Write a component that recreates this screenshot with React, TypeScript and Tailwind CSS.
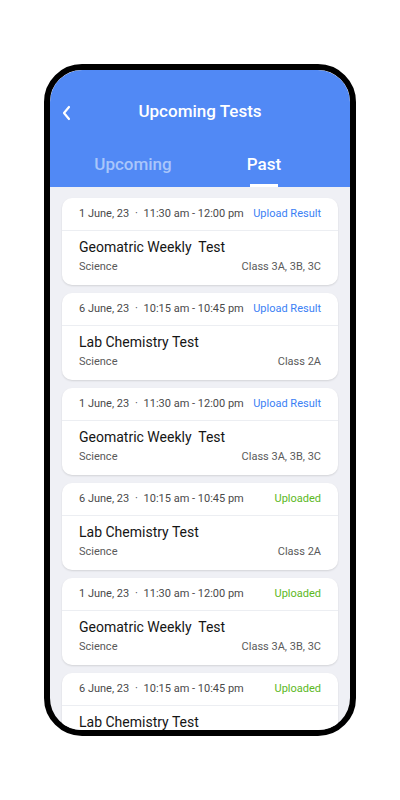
import React from "react";

type Item = {
  date: string;
  time: string;
  title: string;
  cls: string;
  status: "upload" | "uploaded";
};

const items: Item[] = [
  { date: "1 June, 23", time: "11:30 am - 12:00 pm", title: "Geomatric Weekly  Test", cls: "Class 3A, 3B, 3C", status: "upload" },
  { date: "6 June, 23", time: "10:15 am - 10:45 pm", title: "Lab Chemistry Test", cls: "Class 2A", status: "upload" },
  { date: "1 June, 23", time: "11:30 am - 12:00 pm", title: "Geomatric Weekly  Test", cls: "Class 3A, 3B, 3C", status: "upload" },
  { date: "6 June, 23", time: "10:15 am - 10:45 pm", title: "Lab Chemistry Test", cls: "Class 2A", status: "uploaded" },
  { date: "1 June, 23", time: "11:30 am - 12:00 pm", title: "Geomatric Weekly  Test", cls: "Class 3A, 3B, 3C", status: "uploaded" },
  { date: "6 June, 23", time: "10:15 am - 10:45 pm", title: "Lab Chemistry Test", cls: "Class 2A", status: "uploaded" },
];

function Card({ it }: { it: Item }) {
  return (
    <div className="bg-white rounded-[10px] shadow-[0_1px_2px_rgba(0,0,0,0.12)] shrink-0">
      <div className="h-[33px] px-[17px] flex items-center justify-between border-b border-[#eceef2]">
        <div className="text-[11px] text-[#4a4a4a] whitespace-pre">
          {it.date} <span className="mx-[3px]">·</span> {it.time}
        </div>
        {it.status === "upload" ? (
          <div className="text-[11px] text-[#3b7ff5]">Upload Result</div>
        ) : (
          <div className="text-[11px] text-[#5cb81e]">Uploaded</div>
        )}
      </div>
      <div className="px-[17px] pt-[7px] pb-[10px]">
        <div className="text-[14px] leading-[18px] text-[#151515] whitespace-pre">{it.title}</div>
        <div className="mt-[3px] flex justify-between text-[11px] leading-[16px] text-[#5a5a5a]">
          <span>Science</span>
          <span>{it.cls}</span>
        </div>
      </div>
    </div>
  );
}

export default function App() {
  return (
    <div className="w-[400px] h-[800px] bg-white pt-[64px]" style={{ fontFamily: "Roboto, 'Noto Sans', sans-serif" }}>
      <div className="mx-auto w-[312px] h-[672px] rounded-[38px] border-[6px] border-black overflow-hidden bg-[#eff0f5] flex flex-col">
        <div className="bg-[#5189f5] h-[117px] shrink-0 flex flex-col rounded-t-[32px]">
          <div className="relative h-[42px] mt-[21px] shrink-0 flex items-center justify-center">
            <svg className="absolute left-[11px] top-[14px]" width="10" height="16" viewBox="0 0 10 16" fill="none">
              <path d="M8 2L3 8L8 14" stroke="white" strokeWidth="2.2" strokeLinecap="round" strokeLinejoin="round" />
            </svg>
            <div className="text-white text-[17px] font-medium">Upcoming Tests</div>
          </div>
          <div className="flex h-[54px] shrink-0">
            <div className="w-[166px] flex flex-col items-center">
              <div className="text-[17px] font-medium text-[#a9c6fb] leading-[22px] mt-[20px] shrink-0">Upcoming</div>
            </div>
            <div className="w-[96px] flex flex-col items-center">
              <div className="text-[17px] font-medium text-white leading-[22px] mt-[20px] shrink-0">Past</div>
              <div className="w-[28px] h-[3px] bg-white mt-[9px] shrink-0"></div>
            </div>
          </div>
        </div>
        <div className="flex flex-col gap-[8px] px-[12px] pt-[11px] overflow-hidden">
          {items.map((it, i) => (
            <Card key={i} it={it} />
          ))}
        </div>
      </div>
    </div>
  );
}
